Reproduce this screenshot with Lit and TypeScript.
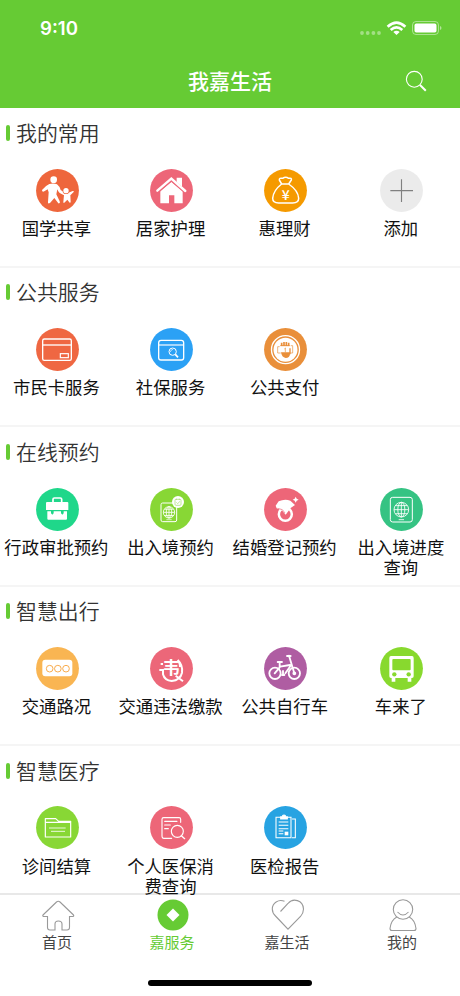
import { LitElement, html, css, svg, SVGTemplateResult } from "lit";
import { customElement, property } from "lit/decorators.js";

// Every service glyph is drawn on a 129 x 129 disc.
const globe = (x: number, y: number, r: number) => svg`
  <g fill="none" stroke="#fff" stroke-width="2.6">
    <circle cx=${x} cy=${y} r=${r}></circle>
    <ellipse cx=${x} cy=${y} rx=${r * 0.48} ry=${r}></ellipse>
    <path d="M${x} ${y - r}v${2 * r}M${x - r} ${y}h${2 * r}M${x - r * 0.8} ${y - r * 0.55}h${r * 1.6}M${x - r * 0.8} ${y + r * 0.55}h${r * 1.6}"></path>
  </g>`;

const glyphs: Record<string, SVGTemplateResult> = {
  family: svg`<g fill="#fff">
    <circle cx="53" cy="32" r="10"></circle>
    <path d="M40 45Q53 41 63 46Q71 52 74 63L82 68L94 73L110 66Q115 65 113 69L103 79L104 98Q104 102 101 101L94 92L85 101Q81 103 82 98L84 79L71 72Q66 67 64 61L61 76L71 97Q74 104 67 103L55 87L42 102Q35 106 36 99L38 70L35 61L25 67Q18 70 18 63Q30 49 40 45Z"></path>
    <circle cx="90" cy="65" r="10" fill="#ee663c"></circle><circle cx="90" cy="65" r="8"></circle></g>`,
  house: svg`<path d="M80 26h16v28l-16-13z" fill="#fff"></path>
    <path d="M31 66L64 38L98 67V103H73V79H57V103H31Z" fill="#fff"></path>
    <path d="M22 68L64 32L106 68" fill="none" stroke="#ed6678" stroke-width="10"></path>
    <path d="M22 65L64 29L106 66" fill="none" stroke="#fff" stroke-width="7" stroke-linecap="round"></path>`,
  bag: svg`<path d="M53 45L46 33Q45 26 56 28Q65 21 74 28Q84 26 82 33L74 45Q103 65 104 88Q104 102 86 102H44Q26 102 26 88Q28 64 53 45ZM53 45H75" fill="none" stroke="#fff" stroke-width="4.5" stroke-linejoin="round"></path>
    <text x="65" y="93" class="yen">¥</text>`,
  plus: svg`<path d="M64.500 31V99M31 65H99" stroke="#808080" stroke-width="3.4"></path>`,
  card: svg`<g fill="none" stroke="#fff" stroke-width="4"><rect x="20" y="33" width="86" height="64" rx="5"></rect><path d="M20 51H106"></path><rect x="73" y="77" width="24" height="12" stroke-width="3.5"></rect></g>`,
  search: svg`<g fill="none" stroke="#fff"><rect x="26" y="37" width="75" height="59" rx="7" stroke-width="4"></rect><path d="M26 51H101" stroke-width="3.500"></path><circle cx="68" cy="71" r="11" stroke-width="3"></circle><path d="M76 79L84 88" stroke-width="5"></path><path d="M61 72Q62 65 69 64" stroke-width="2"></path></g>`,
  coin: svg`<circle cx="64.500" cy="65" r="42" fill="none" stroke="#fff" stroke-width="4"></circle><circle cx="64.500" cy="65" r="36" fill="#fff"></circle>
    <g fill="none" stroke="#e98f3a" stroke-width="5"><path d="M53 44V54M60 42V54M67 42V54M74 44V54"></path><path d="M49 53H77" stroke-width="3"></path><path d="M47 56H41V75H50M80 53H86V75H78M64 60V73M61 63L65 60" stroke-width="2"></path></g>
    <path d="M51 73H78V60V78Q77 90 65 90Q53 88 51 73Z" fill="#e98f3a"></path><path d="M78 61V79" stroke="#e98f3a" stroke-width="4"></path>`,
  briefcase: svg`<path d="M51 43V34Q51 30 55 30H73Q77 30 77 34V43" fill="none" stroke="#fff" stroke-width="5"></path>
    <path d="M33 42H94Q97 42 97 45V66H30V45Q30 42 33 42ZM34 70H93V92Q93 95 90 95H37Q34 95 34 92Z" fill="#fff"></path>
    <path d="M45 69H53V76L49 80L45 76ZM75 69H83V76L79 80L75 76Z" fill="#1fd78a"></path>`,
  booking: svg`<rect x="33" y="45" width="47" height="56" rx="5" fill="none" stroke="#fff" stroke-width="3"></rect>${globe(57, 73, 17)}
    <path d="M49 95H65" stroke="#fff" stroke-width="2"></path><circle cx="84" cy="42" r="18" fill="#fff"></circle>
    <rect x="75" y="34" width="18" height="18" rx="3" fill="none" stroke="#a1dc66" stroke-width="2"></rect><path d="M79 43L83 47L90 40M79 32V36M88 32V36" fill="none" stroke="#a1dc66" stroke-width="2"></path>`,
  ring: svg`<circle cx="64" cy="79" r="19.500" fill="none" stroke="#fff" stroke-width="7.500"></circle>
    <path d="M35 53L44 40Q62 32 79 38L93 51L80 60L65 80L55 68L38 61Z" fill="#fff"></path>
    <path d="M41 61L55 65L63 75" fill="none" stroke="#ed6678" stroke-width="2"></path>
    <path d="M95 26L98 32L104 35L98 38L95 44L92 38L86 35L92 32Z" fill="#fff"></path>`,
  passport: svg`<rect x="31" y="28" width="66" height="74" rx="7" fill="none" stroke="#fff" stroke-width="3"></rect>${globe(64, 65, 22)}<path d="M56 95H72" stroke="#fff" stroke-width="2.500"></path>`,
  traffic: svg`<rect x="19" y="38" width="90" height="50" rx="9" fill="#fff"></rect><g fill="none" stroke="#f7a53f" stroke-width="2.800"><circle cx="41" cy="65" r="10"></circle><circle cx="65.500" cy="65" r="10"></circle><circle cx="90" cy="65" r="10"></circle></g>`,
  violation: svg`<g fill="none" stroke="#fff" stroke-width="6"><path d="M32 51H39M28 69H39V82Q44 101 65 102Q91 99 96 77Q99 54 83 39Q90 47 90 60M77 86L99 103"></path></g><text x="64" y="81" class="wei">韦</text>`,
  bike: svg`<g fill="none" stroke="#fff" stroke-width="5.500" stroke-linecap="round" stroke-linejoin="round"><circle cx="33" cy="79" r="17"></circle><circle cx="91" cy="79" r="17"></circle><path d="M91 79L75 26M69 27H80M41 45H54M47 45V61L32 79M48 59L78 54M57 72V84M54 84H61M80 56L64 79"></path><circle cx="91" cy="79" r="3"></circle></g>`,
  bus: svg`<path d="M33 27H96Q101 27 101 33V88Q101 93 96 93H94V104H83V93H46V104H35V93H33Q28 93 28 88V33Q28 27 33 27Z" fill="#fff"></path>
    <rect x="37" y="36" width="55" height="34" rx="3" fill="#88d92e"></rect><circle cx="43" cy="82" r="6.500" fill="#88d92e"></circle><circle cx="86" cy="82" r="6.500" fill="#88d92e"></circle>`,
  folder: svg`<path d="M28 93V38H59L68 46H104V93ZM28 49H104" fill="none" stroke="#fff" stroke-width="3.600" stroke-linejoin="round"></path><path d="M39 66H89M45 76H87" stroke="#fff" stroke-width="2.500"></path>`,
  inquiry: svg`<g fill="none" stroke="#fff" stroke-width="3.400" stroke-linecap="round"><path d="M92 49V40Q92 35 87 35H41Q36 35 36 40V91Q36 97 41 97H65M44 46H81M44 57H61M44 68H55"></path><circle cx="82" cy="76" r="18"></circle><path d="M94 89L104 98" stroke-width="4"></path></g>`,
  report: svg`<g fill="none" stroke="#fff" stroke-width="3.200"><path d="M50 34H36V95H81V34H69M84 39H94V95H84M44 48H73M44 58H73M44 68H73M44 83H58M44 75H58"></path><path d="M50 39V32H55Q55 27 60 27Q65 27 65 32H70V39Z" fill="#fff"></path></g><rect x="62" y="77" width="11" height="11" fill="#fff"></rect>`,
};

interface Service { icon: string; color: string; label: string; }
const s = (icon: string, color: string, label: string): Service => ({ icon, color, label });

const sections: { title: string; items: Service[] }[] = [
  { title: "我的常用", items: [s("family", "#ee663c", "国学共享"), s("house", "#ed6678", "居家护理"), s("bag", "#f59a00", "惠理财"), s("plus", "#ebebeb", "添加")] },
  { title: "公共服务", items: [s("card", "#ef6742", "市民卡服务"), s("search", "#2ba1f5", "社保服务"), s("coin", "#e98f3a", "公共支付")] },
  { title: "在线预约", items: [s("briefcase", "#1fd78a", "行政审批预约"), s("booking", "#88d735", "出入境预约"), s("ring", "#ed6678", "结婚登记预约"), s("passport", "#35c383", "出入境进度\n查询")] },
  { title: "智慧出行", items: [s("traffic", "#f9b552", "交通路况"), s("violation", "#ec6779", "交通违法缴款"), s("bike", "#af5da2", "公共自行车"), s("bus", "#88d92e", "车来了")] },
  { title: "智慧医疗", items: [s("folder", "#88d735", "诊间结算"), s("inquiry", "#ed6678", "个人医保消\n费查询"), s("report", "#27a3e2", "医检报告")] },
];

@customElement("service-item")
class ServiceItem extends LitElement {
  @property({ attribute: false }) item!: Service;
  static styles = css`
    :host { display: flex; flex-direction: column; align-items: center; }
    .disc { width: 43px; height: 43px; display: block; }
    .label { margin: 6.2px 1.4px 0 0; font-size: 17.35px; line-height: 20.3px; color: #111; white-space: pre; text-align: center; }
    .yen { font: 500 42px "Noto Sans CJK SC", sans-serif; fill: #fff; text-anchor: middle; }
    .wei { font: 700 51px "Noto Sans CJK SC", sans-serif; fill: #fff; text-anchor: middle; }
  `;
  render() {
    return html`<svg class="disc" viewBox="0 0 129 129"><circle cx="64.500" cy="64.500" r="64.300" fill=${this.item.color}></circle>${glyphs[this.item.icon]}</svg>
      <div class="label">${this.item.label}</div>`;
  }
}

const tabs = [
  { label: "首页", icon: svg`<path d="M6.500 17.500H2.500Q1 17 2.500 15.500L15.500 3Q17.300 1.600 19 3L32 15.500Q33.500 17 32 17.500H28.500V28.500Q28.500 31 26 31H21V25Q21 22 17.300 22Q14 22 14 25V31H9Q6.500 31 6.500 28.500Z"></path>` },
  { label: "嘉服务", active: true, icon: svg`<circle cx="17" cy="16" r="15.500" fill="#66cb34" stroke="none"></circle><path d="M17 9.500L23.500 16L17 22.500L10.500 16Z" fill="#fff" stroke="none"></path>` },
  { label: "嘉生活", icon: svg`<path d="M13.500 2.300C7.500-.3 1.300 4 1.300 10Q1.300 14 4.500 17L17 30.200L29.500 17.500Q32.500 14 32.500 10C32 1 22-1.500 17 4.500L9.500 12.500"></path>` },
  { label: "我的", icon: svg`<circle cx="17" cy="10.500" r="9.700"></circle><path d="M10.800 18Q5 21 4 29.500Q4 31.500 6 31.500H28Q30 31.500 30 29.500Q29 21 23.200 18M11.500 13Q17 19 22.500 13"></path>` },
];

@customElement("app-root")
class AppRoot extends LitElement {
  static styles = css`
    :host { display: flex; flex-direction: column; height: 996px; background: #fff; overflow: hidden; font-family: "Noto Sans CJK SC", sans-serif; }
    .top { height: 107.6px; flex: none; background: #66cb34; color: #fff; }
    .status { height: 55px; display: flex; justify-content: space-between; padding: 0 17px 0 40px; }
    .time { font: 600 18.6px/55px Inter, sans-serif; padding-top: 1px; }
    .signals { width: 84px; height: 17px; margin-top: 20px; }
    .nav { display: grid; grid-template-columns: 1fr auto 1fr; align-items: center; height: 51px; }
    .heading { grid-column: 2; font-size: 21px; font-weight: 500; line-height: 30px; margin-top: -1px; }
    .find { justify-self: end; width: 22px; height: 22px; margin-right: 33px; }
    .content { height: 785.4px; box-sizing: border-box; padding-top: .8px; }
    .section { height: 159.4px; box-sizing: border-box; border-bottom: 2px solid #f5f5f5; }
    .section:last-child { border-bottom: 0; }
    .title { display: flex; align-items: center; gap: 6px; padding: 9.6px 0 0 6px; height: 30px; font-size: 20.9px; font-weight: 350; color: #333; }
    .caption { margin-top: -2px; }
    .mark { width: 4px; height: 16px; border-radius: 2px; background: #66cb34; }
    .grid { display: grid; grid-template-columns: 114.2px 114.1px 114.1px 118.4px; padding-top: 20.8px; }
    .tabs { display: grid; grid-template-columns: repeat(4, 1fr); border-top: 2px solid #e8e8e8; height: 78px; box-sizing: border-box; position: relative; z-index: -1; }
    .tab { display: flex; flex-direction: column; align-items: center; color: #444; font-size: 15px; line-height: 20px; }
    .tab.active { color: #66cb34; }
    .tabicon { width: 34px; height: 33px; margin-top: 4px; fill: none; stroke: #999; stroke-width: 1.1; }
    .name { margin: .4px .8px 0 0; }
    .wrap { position: relative; z-index: 0; }
    .home { width: 164px; height: 6px; border-radius: 3px; background: #000; margin: 9px auto 0; }
  `;
  render() {
    return html`
      <div class="wrap">
        <header class="top">
          <div class="status">
            <div class="time">9:10</div>
            <svg class="signals" viewBox="0 0 84 17">
              <g fill="#fff" opacity=".4"><circle cx="3" cy="13" r="1.900"></circle><circle cx="8.700" cy="13" r="1.900"></circle><circle cx="14.400" cy="13" r="1.900"></circle><circle cx="20" cy="13" r="1.900"></circle></g>
              <g fill="none" stroke="#fff" stroke-width="2.700"><path d="M28.600 6.700Q37.500-1.500 46.400 6.700M31.700 10Q37.500 4.700 43.300 10"></path></g><path d="M34.300 12Q37.500 9.300 40.700 12L37.500 15Z" fill="#fff"></path>
              <rect x="53.500" y="1.500" width="26" height="13" rx="3.500" fill="none" stroke="#fff" opacity=".45"></rect><rect x="55.500" y="3.600" width="22" height="9" rx="1.800" fill="#fff"></rect><path d="M81 6Q82.500 6.500 82.500 8T81 10Z" fill="#fff" opacity=".5"></path>
            </svg>
          </div>
          <div class="nav">
            <div class="heading">我嘉生活</div>
            <svg class="find" viewBox="0 0 22 22" fill="none" stroke="#fff"><circle cx="9.300" cy="9.300" r="7.900" stroke-width="1.100"></circle><path d="M15 15L20.800 20.800" stroke-width="2"></path></svg>
          </div>
        </header>
        <main class="content">
          ${sections.map((sec) => html`<section class="section">
            <div class="title"><span class="mark"></span><span class="caption">${sec.title}</span></div>
            <div class="grid">${sec.items.map((item) => html`<service-item .item=${item}></service-item>`)}</div>
          </section>`)}
        </main>
        <nav class="tabs">${tabs.map((t) => html`<div class="tab ${t.active ? "active" : ""}"><svg class="tabicon" viewBox="0 0 34 33">${t.icon}</svg><span class="name">${t.label}</span></div>`)}</nav>
        <div class="home"></div>
      </div>`;
  }
}
